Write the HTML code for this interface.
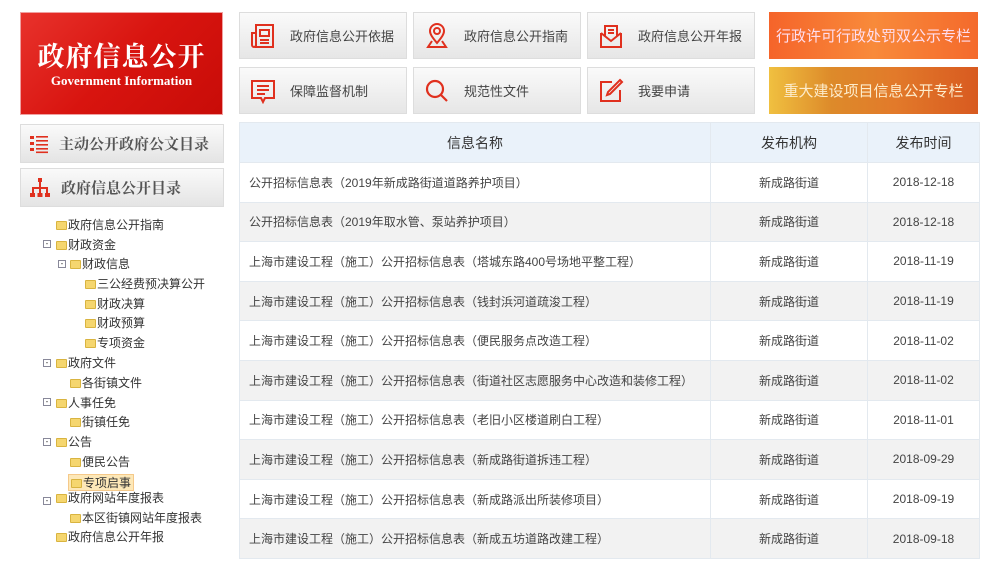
<!DOCTYPE html>
<html><head><meta charset="utf-8"><style>
*{margin:0;padding:0;box-sizing:border-box}
body{width:1000px;height:572px;background:#fff;font-family:"Liberation Sans","Noto Sans CJK SC",sans-serif;position:relative;overflow:hidden;color:#333}
.abs{position:absolute}
.logo{left:20px;top:12px;width:203px;height:103px;background:linear-gradient(135deg,#e8322c 0%,#d8140f 50%,#c80c08 100%);border:1px solid #f0a0a0;color:#fff;text-align:center}
.logo .t1{font-size:27px;font-weight:bold;margin-top:24px;letter-spacing:1px;font-family:"Noto Serif CJK SC",serif;line-height:36px}
.logo .t2{font-size:13px;font-weight:bold;font-family:"Liberation Serif",serif;margin-top:0px}
.btn{height:47px;width:168px;border:1px solid #ddd;background:linear-gradient(#fafafa,#e6e6e6);font-size:13px;color:#444;display:flex;align-items:center}
.btn svg{margin-left:10px;width:26px;height:26px;margin-right:14px}
.ban{left:769px;width:209px;height:47px;color:#fde;font-size:15px;display:flex;align-items:center;justify-content:center;white-space:nowrap}
.side{left:20px;width:204px;height:39px;border:1px solid #ddd;background:linear-gradient(#fafafa,#e4e4e4);font-size:15px;font-weight:bold;color:#555;display:flex;align-items:center;font-family:"Noto Serif CJK SC",serif}
.side svg{margin-left:8px;margin-right:10px}
.tree div{position:absolute;font-size:12px;color:#333;height:16px;line-height:16px;white-space:nowrap}
.f{display:inline-block;width:11px;height:9px;background:#f5d66f;border:1px solid #d9b440;vertical-align:-1px;margin-right:1px;border-radius:1px}
.m{position:absolute;width:8px;height:8px;border:1px solid #889;background:#fff;font-size:8px;line-height:6px;text-align:center;color:#333}
table{position:absolute;left:239px;top:122px;width:741px;border-collapse:collapse;font-size:12px}
td,th{border:1px solid #e3e9ef;height:39.6px;color:#444}
th{background:#eaf2fa;font-size:14px;font-weight:normal;color:#333;height:40px}
td{text-align:center}
td.n{text-align:left;padding-left:9px}
tr:nth-child(odd) td{background:#f2f2f2}
</style></head><body>
<div class="abs logo"><div class="t1">政府信息公开</div><div class="t2">Government Information</div></div>

<div class="abs btn" style="left:239px;top:12px"><svg viewBox="0 0 26 26" fill="none" stroke="#e0301e" stroke-width="2"><rect x="6" y="2" width="17" height="22"/><path d="M10 7h9v6h-9zM10 17h9M10 20h9M6 10H2v12a2 2 0 0 0 4 0"/></svg>政府信息公开依据</div>
<div class="abs btn" style="left:413px;top:12px"><svg viewBox="0 0 26 26" fill="none" stroke="#e0301e" stroke-width="2"><path d="M13 20C8 14 6 11 6 8a7 7 0 0 1 14 0c0 3-2 6-7 12z"/><circle cx="13" cy="8" r="3"/><path d="M8 18l-4 6h18l-4-6"/></svg>政府信息公开指南</div>
<div class="abs btn" style="left:587px;top:12px"><svg viewBox="0 0 26 26" fill="none" stroke="#e0301e" stroke-width="2"><path d="M3 10v14h20V10M3 10l10 8 10-8M7 13V3h12v10M10 7h6M10 10h6"/></svg>政府信息公开年报</div>
<div class="abs ban" style="top:12px;background:linear-gradient(90deg,#f5642a,#f88a3a 50%,#f46a2c)">行政许可行政处罚双公示专栏</div>

<div class="abs btn" style="left:239px;top:67px"><svg viewBox="0 0 26 26" fill="none" stroke="#e0301e" stroke-width="2"><path d="M2 3h22v17H15l-2 4-2-4H2z"/><path d="M7 8h12M7 12h12M7 16h8"/></svg>保障监督机制</div>
<div class="abs btn" style="left:413px;top:67px"><svg viewBox="0 0 26 26" fill="none" stroke="#e0301e" stroke-width="2.2"><circle cx="11" cy="11" r="8"/><path d="M17 17l6 6"/></svg>规范性文件</div>
<div class="abs btn" style="left:587px;top:67px"><svg viewBox="0 0 26 26" fill="none" stroke="#e0301e" stroke-width="2"><path d="M14 4H3v19h19V12"/><path d="M22 2l2 2-12 12-3 1 1-3z"/></svg>我要申请</div>
<div class="abs ban" style="top:67px;background:linear-gradient(90deg,#f0c040,#dd8a2a 30%,#e27a2a 60%,#d85a20);color:#fdeccc">重大建设项目信息公开专栏</div>

<div class="abs side" style="top:124px"><svg width="20" height="20" viewBox="0 0 20 20" fill="#e0301e"><rect x="1" y="2" width="4" height="3"/><rect x="1" y="8" width="4" height="3"/><rect x="1" y="14" width="4" height="3"/><rect x="7" y="2" width="12" height="1.6"/><rect x="7" y="6" width="12" height="1.6"/><rect x="7" y="10" width="12" height="1.6"/><rect x="7" y="14" width="12" height="1.6"/><rect x="7" y="17.5" width="12" height="1.6"/></svg>主动公开政府公文目录</div>
<div class="abs side" style="top:168px"><svg width="22" height="22" viewBox="0 0 22 22" fill="#e0301e"><rect x="9" y="1" width="4" height="4"/><rect x="10" y="5" width="2" height="6"/><rect x="3" y="10" width="16" height="2"/><rect x="3" y="10" width="2" height="6"/><rect x="10" y="10" width="2" height="6"/><rect x="17" y="10" width="2" height="6"/><rect x="1" y="16" width="5" height="4"/><rect x="8.5" y="16" width="5" height="4"/><rect x="16" y="16" width="5" height="4"/></svg>政府信息公开目录</div>

<div class="tree">
<div style="left:56px;top:217px"><span class="f"></span>政府信息公开指南</div>
<span class="m" style="left:43px;top:240px">-</span><div style="left:56px;top:237px"><span class="f"></span>财政资金</div>
<span class="m" style="left:58px;top:260px">-</span><div style="left:70px;top:256px"><span class="f"></span>财政信息</div>
<div style="left:85px;top:276px"><span class="f"></span>三公经费预决算公开</div>
<div style="left:85px;top:296px"><span class="f"></span>财政决算</div>
<div style="left:85px;top:315px"><span class="f"></span>财政预算</div>
<div style="left:85px;top:335px"><span class="f"></span>专项资金</div>
<span class="m" style="left:43px;top:359px">-</span><div style="left:56px;top:355px"><span class="f"></span>政府文件</div>
<div style="left:70px;top:375px"><span class="f"></span>各街镇文件</div>
<span class="m" style="left:43px;top:398px">-</span><div style="left:56px;top:395px"><span class="f"></span>人事任免</div>
<div style="left:70px;top:414px"><span class="f"></span>街镇任免</div>
<span class="m" style="left:43px;top:438px">-</span><div style="left:56px;top:434px"><span class="f"></span>公告</div>
<div style="left:70px;top:454px"><span class="f"></span>便民公告</div>
<div style="left:68px;top:474px;background:#fde8b8;border:1px solid #f5c98a;padding:0 2px;height:17px"><span class="f"></span>专项启事</div>
<span class="m" style="left:43px;top:497px">-</span><div style="left:56px;top:490px"><span class="f"></span>政府网站年度报表</div>
<div style="left:70px;top:510px"><span class="f"></span>本区街镇网站年度报表</div>
<div style="left:56px;top:529px"><span class="f"></span>政府信息公开年报</div>
</div>

<table>
<tr><th style="width:471px">信息名称</th><th style="width:157px">发布机构</th><th>发布时间</th></tr>
<tr><td class="n">公开招标信息表（2019年新成路街道道路养护项目）</td><td>新成路街道</td><td>2018-12-18</td></tr>
<tr><td class="n">公开招标信息表（2019年取水管、泵站养护项目）</td><td>新成路街道</td><td>2018-12-18</td></tr>
<tr><td class="n">上海市建设工程（施工）公开招标信息表（塔城东路400号场地平整工程）</td><td>新成路街道</td><td>2018-11-19</td></tr>
<tr><td class="n">上海市建设工程（施工）公开招标信息表（钱封浜河道疏浚工程）</td><td>新成路街道</td><td>2018-11-19</td></tr>
<tr><td class="n">上海市建设工程（施工）公开招标信息表（便民服务点改造工程）</td><td>新成路街道</td><td>2018-11-02</td></tr>
<tr><td class="n">上海市建设工程（施工）公开招标信息表（街道社区志愿服务中心改造和装修工程）</td><td>新成路街道</td><td>2018-11-02</td></tr>
<tr><td class="n">上海市建设工程（施工）公开招标信息表（老旧小区楼道刷白工程）</td><td>新成路街道</td><td>2018-11-01</td></tr>
<tr><td class="n">上海市建设工程（施工）公开招标信息表（新成路街道拆违工程）</td><td>新成路街道</td><td>2018-09-29</td></tr>
<tr><td class="n">上海市建设工程（施工）公开招标信息表（新成路派出所装修项目）</td><td>新成路街道</td><td>2018-09-19</td></tr>
<tr><td class="n">上海市建设工程（施工）公开招标信息表（新成五坊道路改建工程）</td><td>新成路街道</td><td>2018-09-18</td></tr>
</table>
</body></html>
